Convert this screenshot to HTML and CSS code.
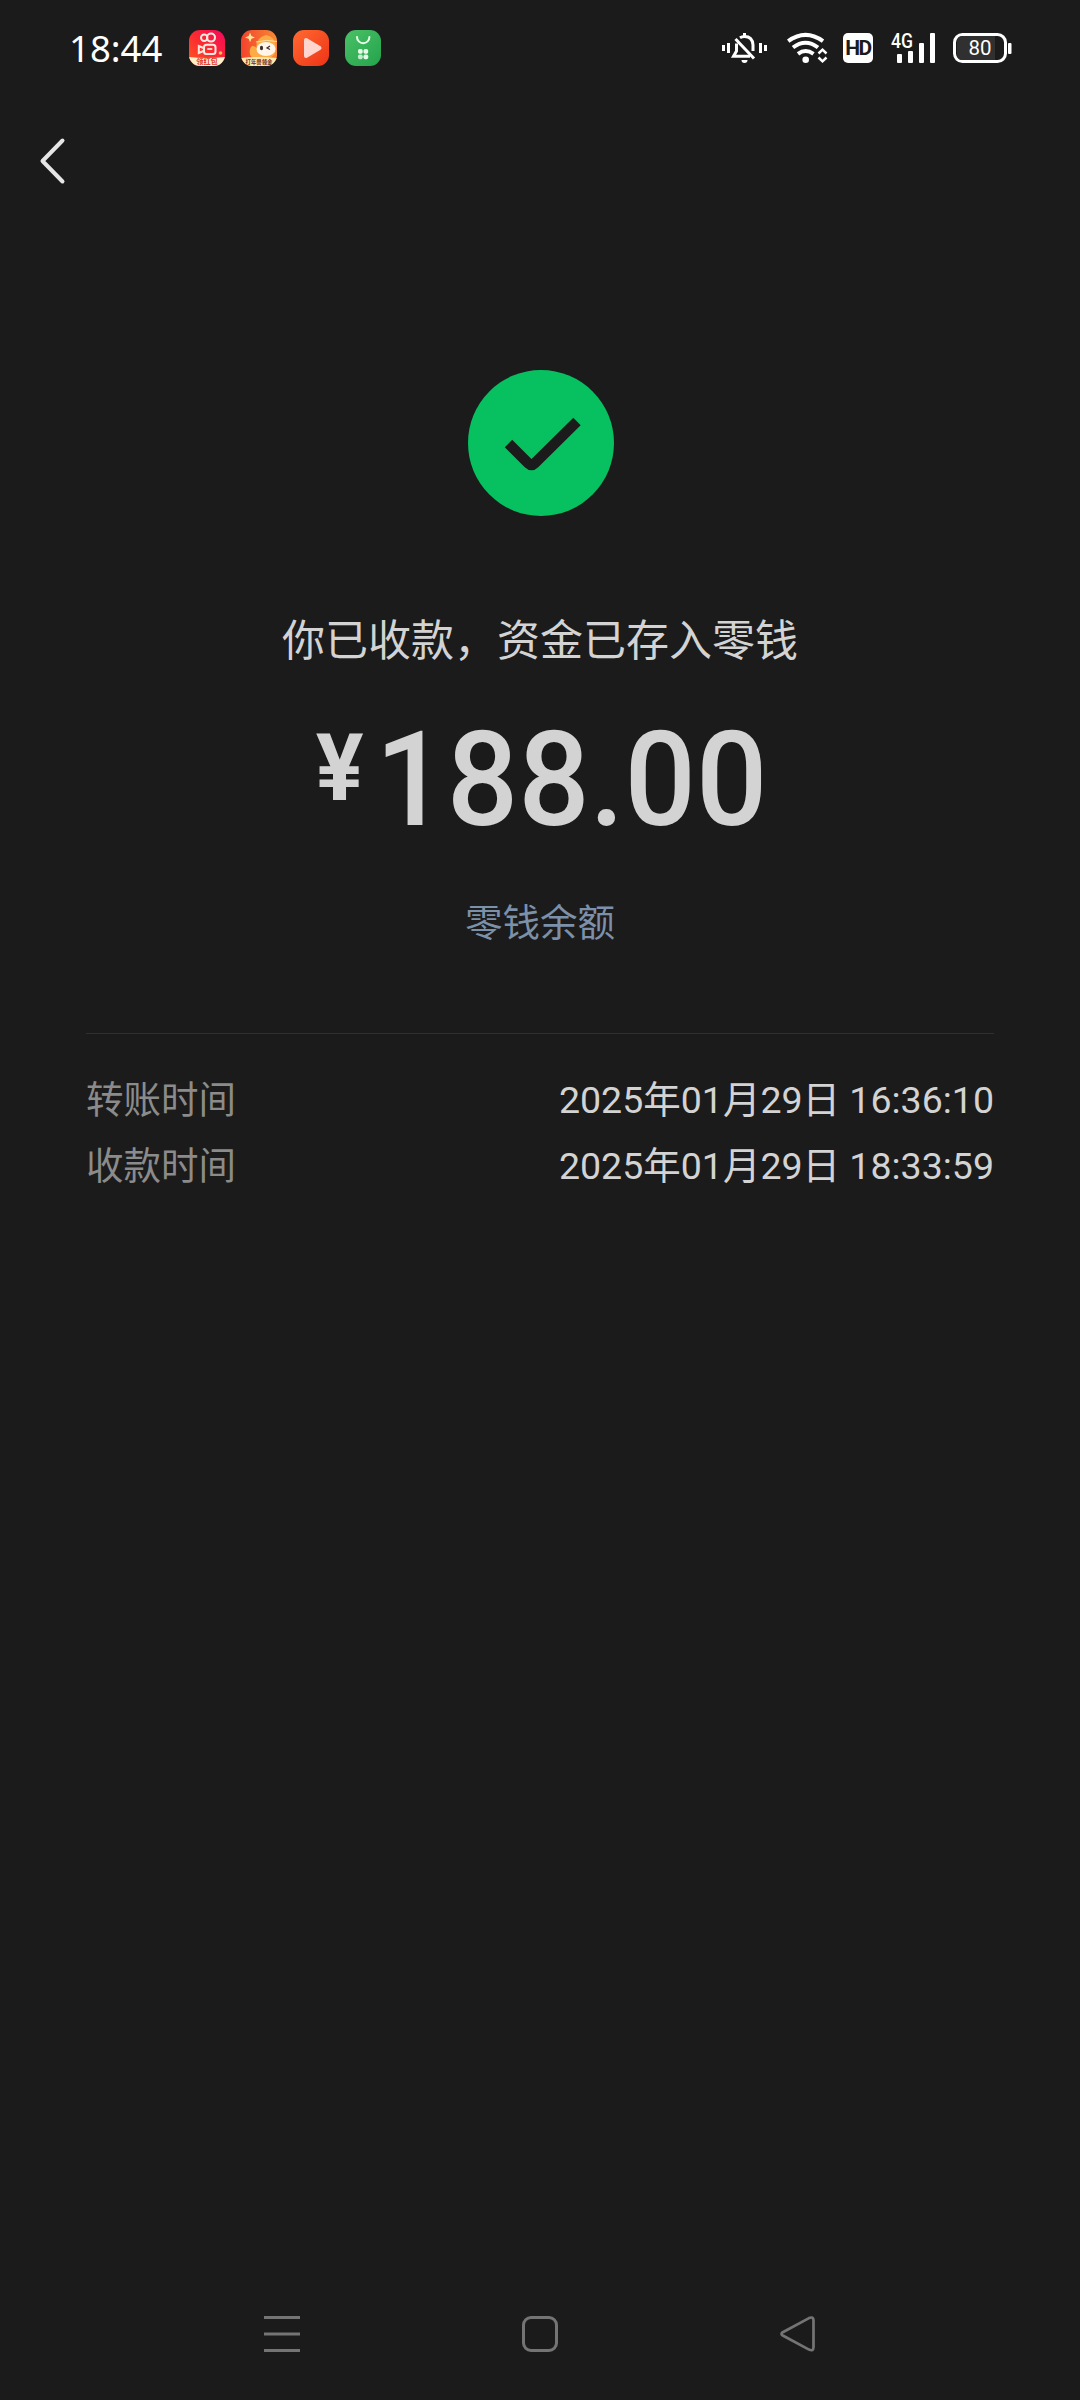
FILE: index.html
```html
<!DOCTYPE html>
<html lang="zh-CN">
<head>
<meta charset="utf-8">
<title>收款详情</title>
<link rel="stylesheet" href="styles.css">
</head>
<body>
<header class="status">
  <span class="clock">18:44</span>
  <div class="apps">
    <svg class="app" viewBox="0 0 36 36">
      <defs><linearGradient id="kwai" x1="0" y1="1" x2="1" y2="0"><stop offset="0" stop-color="#ff5a1f"/><stop offset=".5" stop-color="#fb2a32"/><stop offset="1" stop-color="#f5085c"/></linearGradient></defs>
      <rect width="36" height="36" fill="url(#kwai)"/>
      <g fill="none" stroke="#ffe9df" stroke-width="2"><circle cx="15.2" cy="7.8" r="3.2"/><circle cx="22" cy="7.6" r="4"/><rect x="15" y="14.7" width="11.500" height="9.200" rx="2.500"/><path d="M14.500 18 9.800 16v7l4.700-2"/></g>
      <rect x="18" y="18" width="5.500" height="2" rx="1" fill="#ffd1bd"/>
      <circle cx="31.500" cy="23" r="1.800" fill="#ffc34d"/>
      <path d="M0 27q18 2 36 0v9H0z" fill="#fff0c9"/>
      <text class="tag" x="18" y="34.200" font-size="7.200" fill="#e03a2c">领红包</text>
    </svg>
    <svg class="app" viewBox="0 0 36 36">
      <defs><linearGradient id="fest"><stop offset="0" stop-color="#f4422d"/><stop offset="1" stop-color="#f78a35"/></linearGradient></defs>
      <rect width="36" height="36" fill="url(#fest)"/>
      <path d="M13 28C7 27 8 16 12 16q4 0 4 6Q13 8 25 5q10 2 10 13 0 9-8 10z" fill="#fdab45"/>
      <path d="M9 2.500l1.500 3.500 3.500 1.500-3.500 1.300L9 12.300 7.700 8.800 4 7.500 7.700 6z" fill="#ffe59b"/>
      <path d="M15 12q11-3 21-.5" fill="none" stroke="#ffe0a2" stroke-width="1"/>
      <ellipse cx="25" cy="19" rx="9.500" ry="7" fill="#fff5e9"/>
      <ellipse cx="20.500" cy="18" rx="1.600" ry="2.200" fill="#3b302e"/>
      <path d="M29 16l-3 2 3 1.500" fill="none" stroke="#3b302e" stroke-width="1.200"/>
      <path d="M0 28q18-2 36 0v8H0z" fill="#ffe7ae"/>
      <text class="tag" x="18" y="34" font-size="5.400" fill="#6d2c17">打年兽领金</text>
    </svg>
    <svg class="app" viewBox="0 0 36 36">
      <defs><linearGradient id="play" x1="0" y1="0" x2="1" y2="1"><stop offset="0" stop-color="#ff6a31"/><stop offset="1" stop-color="#ee3316"/></linearGradient></defs>
      <rect width="36" height="36" fill="url(#play)"/>
      <path d="M13 10v16l13.500-8z" fill="#ffd5cd" stroke="#ffd5cd" stroke-width="4" stroke-linejoin="round"/>
    </svg>
    <svg class="app" viewBox="0 0 36 36">
      <defs><linearGradient id="shop" x1="0" y1="0" x2="1" y2="1"><stop offset="0" stop-color="#4ac166"/><stop offset="1" stop-color="#24a34c"/></linearGradient></defs>
      <rect width="36" height="36" fill="url(#shop)"/>
      <path d="M12 7a6.200 6.200 0 0 0 12.400 0" fill="none" stroke="#e9ffe9" stroke-width="2" stroke-linecap="round"/>
      <g fill="#e7faea"><rect x="13" y="19" width="4.700" height="4.700" rx="1.700"/><rect x="18.500" y="19" width="4.700" height="4.700" rx="1.700"/><rect x="13" y="24.500" width="4.700" height="4.700" rx="1.700" opacity=".8"/><rect x="18.500" y="24.500" width="4.700" height="4.700" rx="1.700"/></g>
    </svg>
  </div>
  <div class="system">
    <svg width="45" height="30" viewBox="0 0 45 30">
      <g fill="#fff"><rect x="0" y="12" width="3" height="6"/><rect x="5" y="10" width="3" height="10"/><rect x="37" y="10" width="3" height="10"/><rect x="42" y="12" width="3" height="6"/><rect x="21" y="0" width="3" height="4"/><path d="M19.500 27h6a3 3 0 0 1-6 0z"/></g>
      <path d="M18 4.800Q20 3.500 22.500 3.500q8 0 8.500 8.500v6M14.500 10.500V18l-3 5.300H28" fill="none" stroke="#fff" stroke-width="3"/>
      <path d="M13.500 6 32 25.500" stroke="#fff" stroke-width="3"/>
    </svg>
    <svg class="wifi" width="40" height="30" viewBox="0 0 40 30">
      <g fill="none" stroke="#fff" stroke-width="4"><path d="M1.200 8.200Q18.500-4.400 36 8.200"/><path d="M6 14.500q12.500-9.500 25 0"/><path d="M11 20.800q7.500-5.600 15.500 0"/></g>
      <circle cx="18.700" cy="26.700" r="3.300" fill="#fff"/>
      <path d="M31.500 20.500l4-3.800 4 3.800M31.500 24.500l4 3.800 4-3.800" fill="none" stroke="#fff" stroke-width="2.500"/>
    </svg>
    <span class="hd">HD</span>
    <svg class="signal" width="45" height="30" viewBox="0 0 45 30">
      <text x="0" y="15" class="net" textLength="22" lengthAdjust="spacingAndGlyphs">4G</text>
      <g fill="#fff"><rect x="6" y="21" width="5" height="9" rx="1"/><rect x="17" y="18" width="5" height="12" rx="1"/><rect x="28" y="10" width="5" height="20" rx="1"/><rect x="39" y="0" width="5" height="30" rx="1"/></g>
    </svg>
    <svg class="battery" width="59" height="30" viewBox="0 0 59 30">
      <rect x="1.500" y="1.500" width="51" height="27" rx="8" fill="#1b1b1b" stroke="#fff" stroke-width="3"/>
      <path d="M9 3h33v24H9q-5 0-5-6V9q0-6 5-6z" fill="#303030"/>
      <rect x="55" y="10" width="3.500" height="11" rx="1" fill="#fff"/>
      <text x="27" y="22.300" class="level" textLength="23" lengthAdjust="spacingAndGlyphs">80</text>
    </svg>
  </div>
</header>

<nav class="topbar">
  <svg width="26" height="46" viewBox="0 0 26 46"><path d="M23.500 2.500 3.500 23l20 20.500" fill="none" stroke="#e6e6e6" stroke-width="4" stroke-linecap="round" stroke-linejoin="round"/></svg>
</nav>

<main class="content">
  <svg class="done" width="146" height="146" viewBox="0 0 146 146">
    <circle cx="73" cy="73" r="73" fill="#07c160"/>
    <path d="M40.500 73.500 60.500 93.500q3 3 6 0L109 51.500" fill="none" stroke="#1b1b1b" stroke-width="10.500" stroke-linejoin="round"/>
  </svg>
  <h1 class="title">你已收款，资金已存入零钱</h1>
  <div class="amount"><span class="yen">¥</span><span class="value">188.00</span></div>
  <a class="link">零钱余额</a>
  <dl class="details">
    <div class="row"><dt>转账时间</dt><dd>2025年01月29日 16:36:10</dd></div>
    <div class="row"><dt>收款时间</dt><dd>2025年01月29日 18:33:59</dd></div>
  </dl>
</main>

<footer class="keys">
  <svg width="36" height="36" viewBox="0 0 36 36"><path d="M0 1.500h36M0 18h36M0 34.500h36" stroke="#747474" stroke-width="3"/></svg>
  <svg width="36" height="36" viewBox="0 0 36 36"><rect x="1.500" y="1.500" width="33" height="33" rx="7.500" fill="none" stroke="#747474" stroke-width="3"/></svg>
  <svg width="36" height="36" viewBox="0 0 36 36"><path d="M2.800 16.200 29 2.100q4.500-2 4.500 2.500v26.500q0 4.500-4.500 2.500L2.800 19.500q-2.600-1.600 0-3.300z" fill="none" stroke="#747474" stroke-width="2.700"/></svg>
</footer>
</body>
</html>
```
FILE: styles.css
```css
* { box-sizing: border-box; margin: 0; padding: 0; }
body {
  display: flex;
  flex-direction: column;
  height: 2400px;
  background: #1b1b1b;
  color: #d3d3d3;
  font-family: Roboto, "Noto Sans CJK SC", sans-serif;
}
svg { display: block; flex: none; overflow: visible; }

.status {
  display: flex;
  align-items: center;
  height: 96px;
  padding: 0 68px 0 69px;
}
.clock {
  width: 120px;
  color: #fff;
  font: 400 36.500px/40px "Noto Sans", sans-serif;
}
.apps { display: flex; gap: 16px; }
.app { width: 36px; height: 36px; border-radius: 11px; overflow: hidden; }
.tag { font-family: "Noto Sans CJK SC", sans-serif; font-weight: 700; text-anchor: middle; }
.system { display: flex; align-items: center; margin-left: auto; }
.wifi { margin-left: 20px; }
.hd {
  width: 30px;
  height: 30px;
  margin-left: 16px;
  border-radius: 5px;
  background: #fff;
  color: #1b1b1b;
  font: 700 21px/30px Roboto, sans-serif;
  letter-spacing: -1.500px;
  text-align: center;
}
.signal { margin-left: 18px; }
.net { font: 500 20px Roboto, sans-serif; fill: #fff; }
.battery { margin-left: 17px; }
.level { font: 400 21px Roboto, sans-serif; fill: #fff; text-anchor: middle; }

.topbar { height: 130px; padding: 42px 0 0 39px; }

.content {
  display: flex;
  flex: 1;
  flex-direction: column;
  align-items: center;
  padding: 144px 86px 0;
}
.done { margin-left: 1px; }
.title {
  margin-top: 93px;
  font-size: 43px;
  font-weight: 400;
  line-height: 64px;
}
.amount {
  display: flex;
  align-items: flex-start;
  justify-content: center;
  height: 134px;
  margin-top: 29px;
  padding-left: 10px;
}
.yen { margin: 11px 3px 0 0; font-size: 92px; font-weight: 700; line-height: 112px; transform: scaleX(.97); }
.value { font-size: 131px; font-weight: 500; line-height: 157px; transform: scaleX(.96); transform-origin: center; }
.link { margin-top: 59px; color: #7d90a9; font-size: 37.500px; line-height: 56px; }
.details {
  align-self: stretch;
  margin-top: 82px;
  padding-top: 33px;
  border-top: 1px solid #303030;
}
.row { display: flex; justify-content: space-between; height: 66px; font-size: 37.500px; line-height: 66px; }
.row dt { color: #8b8b8b; }

.keys { display: flex; justify-content: center; gap: 222px; height: 84px; }
```
